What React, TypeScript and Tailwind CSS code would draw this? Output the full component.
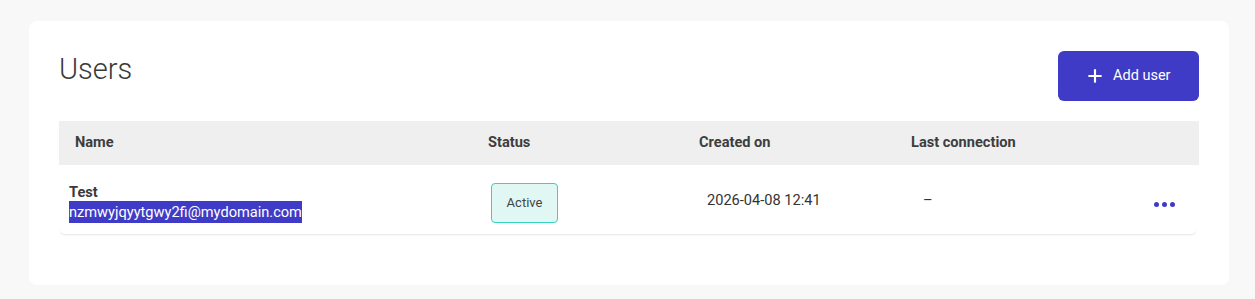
import { Plus } from 'lucide-react';

type User = {
  name: string;
  email: string;
  status: string;
  createdOn: string;
  lastConnection: string;
};

const users: User[] = [
  {
    name: 'Test',
    email: 'nzmwyjqyytgwy2fi@mydomain.com',
    status: 'Active',
    createdOn: '2026-04-08 12:41',
    lastConnection: '–',
  },
];

export default function App() {
  return (
    <div
      className="min-h-[299px] w-full bg-[#f8f8f8] pt-[21px] pl-[29px] pr-[26px] pb-[15px]"
      style={{ fontFamily: 'Roboto, "Liberation Sans", sans-serif' }}
    >
      <section className="bg-white rounded-[8px] pt-[30px] px-[30px] pb-[50px]">
        {/* Title + action */}
        <div className="flex items-start justify-between">
          <h1 className="text-[29px] leading-[36px] font-light text-[#3a3a3a]">Users</h1>
          <button className="flex items-center gap-[8px] h-[50px] w-[141px] pl-[27px] rounded-[6px] bg-[#3f3bc6] text-white text-[14.5px] leading-none">
            <Plus size={20} strokeWidth={2.6} />
            <span>Add user</span>
          </button>
        </div>

        {/* Table */}
        <div className="mt-[20px]">
          <div className="grid grid-cols-[413px_211px_212px_1fr] items-center h-[44px] pl-[16px] bg-[#efefef] text-[14.6px] font-bold text-[#3d3d3d]">
            <div>Name</div>
            <div>Status</div>
            <div>Created on</div>
            <div>Last connection</div>
          </div>

          {users.map((user, index) => (
            <div
              key={index}
              className="grid grid-cols-[422px_216px_216px_1fr_auto] items-center mr-[2px] pl-[10px] pr-[22px] pt-[18px] pb-[11px] border-b border-[#ececec] rounded-b-[6px] shadow-[0_1px_1px_rgba(0,0,0,0.03)] text-[14.6px] text-[#333]"
            >
              <div className="flex flex-col items-start">
                <span className="font-bold leading-[18px] text-[#3a3a3a]">{user.name}</span>
                <span className="inline-block leading-[22px] bg-[#3f3bc6] text-white">{user.email}</span>
              </div>
              <div>
                <span className="flex items-center justify-center w-[67px] h-[40px] rounded-[4px] border border-[#36d3c0] bg-[#e1f7f4] text-[13px] text-[#444]">
                  {user.status}
                </span>
              </div>
              <div className="pb-[4px]">{user.createdOn}</div>
              <div className="pb-[4px]">{user.lastConnection}</div>
              <button className="flex items-center gap-[3px] pt-[2px]">
                <span className="w-[5px] h-[5px] rounded-full bg-[#3f3bc6]" />
                <span className="w-[5px] h-[5px] rounded-full bg-[#3f3bc6]" />
                <span className="w-[5px] h-[5px] rounded-full bg-[#3f3bc6]" />
              </button>
            </div>
          ))}
        </div>
      </section>
    </div>
  );
}
